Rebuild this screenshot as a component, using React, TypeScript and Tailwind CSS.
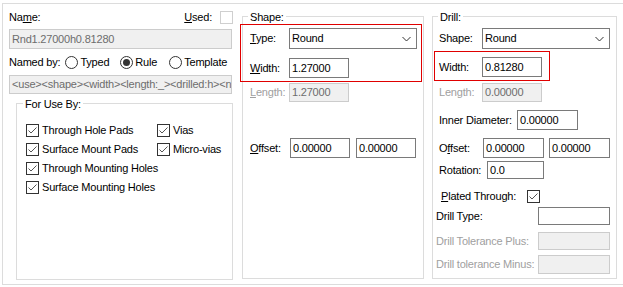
import React from "react";

const Check = ({ checked = true, light = false }: { checked?: boolean; light?: boolean }) => (
  <div
    className={`w-[13px] h-[13px] shrink-0 border bg-white flex items-center justify-center ${
      light ? "border-[#cfcfcf]" : "border-[#333333]"
    }`}
  >
    {checked && (
      <svg width="11" height="11" viewBox="0 0 11 11">
        <polyline points="1.5,5.5 4,8 9.5,2.5" fill="none" stroke="#555555" strokeWidth="1" />
      </svg>
    )}
  </div>
);

const Radio = ({ on = false }: { on?: boolean }) => (
  <div className="w-[13px] h-[13px] shrink-0 rounded-full border border-[#333333] bg-white flex items-center justify-center">
    {on && <div className="w-[7px] h-[7px] rounded-full bg-[#333333]" />}
  </div>
);

const Input = ({
  w,
  h,
  value = "",
  disabled = false,
}: {
  w: string;
  h: string;
  value?: string;
  disabled?: boolean;
}) => (
  <div
    className={`${w} ${h} shrink-0 border flex items-center px-[2px] whitespace-nowrap overflow-hidden ${
      disabled ? "border-[#cccccc] bg-[#f0f0f0] text-[#6d6d6d]" : "border-[#7a7a7a] bg-white text-black"
    }`}
  >
    {value}
  </div>
);

const Select = ({ value }: { value: string }) => (
  <div className="w-[128px] h-[21px] shrink-0 border border-[#7a7a7a] bg-white flex items-center justify-between pl-[2px] pr-[5px]">
    <span>{value}</span>
    <svg width="9" height="6" viewBox="0 0 9 6">
      <polyline points="0.5,1 4.5,5 8.5,1" fill="none" stroke="#333333" strokeWidth="1" />
    </svg>
  </div>
);

const Legend = ({ children, left }: { children: React.ReactNode; left: string }) => (
  <div className={`absolute -top-[7px] ${left} bg-white px-[2px] leading-[15px]`}>{children}</div>
);

export default function App() {
  return (
    <div className="relative w-[623px] h-[287px] bg-white overflow-hidden text-[11px] tracking-[-0.2px] whitespace-nowrap text-black font-['Liberation_Sans',Arial,sans-serif]">
      <div className="ml-[2px] mt-[3px] w-[621px] h-[282px] border-l border-t border-b border-[#dcdcdc] flex items-start">
        {/* Left column */}
        <div className="ml-[6px] w-[224px] flex flex-col">
          <div className="mt-[4px] h-[19px] flex items-center">
            <span>
              Na<u>m</u>e:
            </span>
            <span className="ml-auto mr-[8px]">
              <u>U</u>sed:
            </span>
            <Check checked={false} light />
          </div>
          <div className="mt-[2px]">
            <Input w="w-[223px]" h="h-[20px]" value="Rnd1.27000h0.81280" disabled />
          </div>
          <div className="h-[26px] flex items-center">
            <span className="mr-[5px]">Named by:</span>
            <Radio />
            <span className="ml-[2px] mr-[11px]">Typed</span>
            <Radio on />
            <span className="ml-[2px] mr-[12px]">Rule</span>
            <Radio />
            <span className="ml-[2px]">Template</span>
          </div>
          <Input
            w="w-[223px]"
            h="h-[19px]"
            value="<use><shape><width><length:_><drilled:h><n"
            disabled
          />
          <div className="relative mt-[9px] ml-[7px] w-[217px] h-[177px] border border-[#dcdcdc]">
            <Legend left="left-[6px]">For Use By:</Legend>
            <div className="mt-[17px] pl-[9px] grid grid-cols-[131px_auto]">
              <div className="h-[19px] flex items-center gap-[3px]">
                <Check />
                <span>Through Hole Pads</span>
              </div>
              <div className="h-[19px] flex items-center gap-[3px]">
                <Check />
                <span>Vias</span>
              </div>
              <div className="h-[19px] flex items-center gap-[3px]">
                <Check />
                <span>Surface Mount Pads</span>
              </div>
              <div className="h-[19px] flex items-center gap-[3px]">
                <Check />
                <span>Micro-vias</span>
              </div>
              <div className="col-span-2 h-[19px] flex items-center gap-[3px]">
                <Check />
                <span>Through Mounting Holes</span>
              </div>
              <div className="col-span-2 h-[19px] flex items-center gap-[3px]">
                <Check />
                <span>Surface Mounting Holes</span>
              </div>
            </div>
          </div>
        </div>

        {/* Shape group */}
        <div className="relative ml-[9px] mt-[12px] w-[182px] h-[263px] border border-[#dcdcdc] pl-[7px] flex flex-col">
          <Legend left="left-[5px]">Shape:</Legend>
          <div className="mt-[11px] h-[21px] flex items-center">
            <span className="w-[39px]">
              <u>T</u>ype:
            </span>
            <Select value="Round" />
          </div>
          <div className="mt-[9px] h-[20px] flex items-center">
            <span className="w-[39px]">
              <u>W</u>idth:
            </span>
            <Input w="w-[60px]" h="h-[20px]" value="1.27000" />
          </div>
          <div className="mt-[5px] h-[19px] flex items-center">
            <span className="w-[39px] text-[#a0a0a0]">
              <u>L</u>ength:
            </span>
            <Input w="w-[60px]" h="h-[19px]" value="1.27000" disabled />
          </div>
          <div className="mt-[36px] h-[20px] flex items-center">
            <span className="w-[40px]">
              <u>O</u>ffset:
            </span>
            <Input w="w-[60px]" h="h-[20px]" value="0.00000" />
            <span className="w-[6px]" />
            <Input w="w-[60px]" h="h-[20px]" value="0.00000" />
          </div>
        </div>

        {/* Drill group */}
        <div className="relative ml-[8px] mt-[12px] w-[185px] h-[263px] border border-[#dcdcdc] pl-[6px] flex flex-col">
          <Legend left="left-[5px]">Drill:</Legend>
          <div className="mt-[11px] h-[21px] flex items-center">
            <span className="w-[43px]">Shape:</span>
            <Select value="Round" />
          </div>
          <div className="mt-[8px] h-[20px] flex items-center">
            <span className="w-[43px]">Width:</span>
            <Input w="w-[60px]" h="h-[20px]" value="0.81280" />
          </div>
          <div className="mt-[6px] h-[19px] flex items-center">
            <span className="w-[43px] text-[#a0a0a0]">Length:</span>
            <Input w="w-[60px]" h="h-[19px]" value="0.00000" disabled />
          </div>
          <div className="mt-[8px] h-[20px] flex items-center">
            <span className="w-[78px]">Inner Diameter:</span>
            <Input w="w-[61px]" h="h-[20px]" value="0.00000" />
          </div>
          <div className="mt-[8px] h-[20px] flex items-center">
            <span className="w-[44px]">
              O<u>f</u>fset:
            </span>
            <Input w="w-[61px]" h="h-[20px]" value="0.00000" />
            <span className="w-[5px]" />
            <Input w="w-[61px]" h="h-[20px]" value="0.00000" />
          </div>
          <div className="mt-[3px] h-[18px] flex items-center">
            <span className="w-[48px]">Rotation:</span>
            <Input w="w-[57px]" h="h-[18px]" value="0.0" />
          </div>
          <div className="mt-[9px] h-[16px] flex items-center">
            <span className="w-[88px] pl-[2px]">
              <u>P</u>lated Through:
            </span>
            <Check />
          </div>
          <div className="mt-[3px] h-[18px] flex items-center -ml-[3px]">
            <span className="w-[102px]">Drill Type:</span>
            <Input w="w-[72px]" h="h-[18px]" />
          </div>
          <div className="mt-[7px] h-[18px] flex items-center -ml-[3px]">
            <span className="w-[102px] text-[#a0a0a0]">Drill Tolerance Plus:</span>
            <Input w="w-[72px]" h="h-[18px]" disabled />
          </div>
          <div className="mt-[5px] h-[19px] flex items-center -ml-[3px]">
            <span className="w-[102px] text-[#a0a0a0]">Drill tolerance Minus:</span>
            <Input w="w-[72px]" h="h-[19px]" disabled />
          </div>
        </div>
      </div>

      {/* Red annotation boxes */}
      <div className="absolute left-[240px] top-[24px] w-[182px] h-[58px] border border-[#e00000]" />
      <div className="absolute left-[434px] top-[51px] w-[116px] h-[30px] border border-[#e00000]" />
    </div>
  );
}
